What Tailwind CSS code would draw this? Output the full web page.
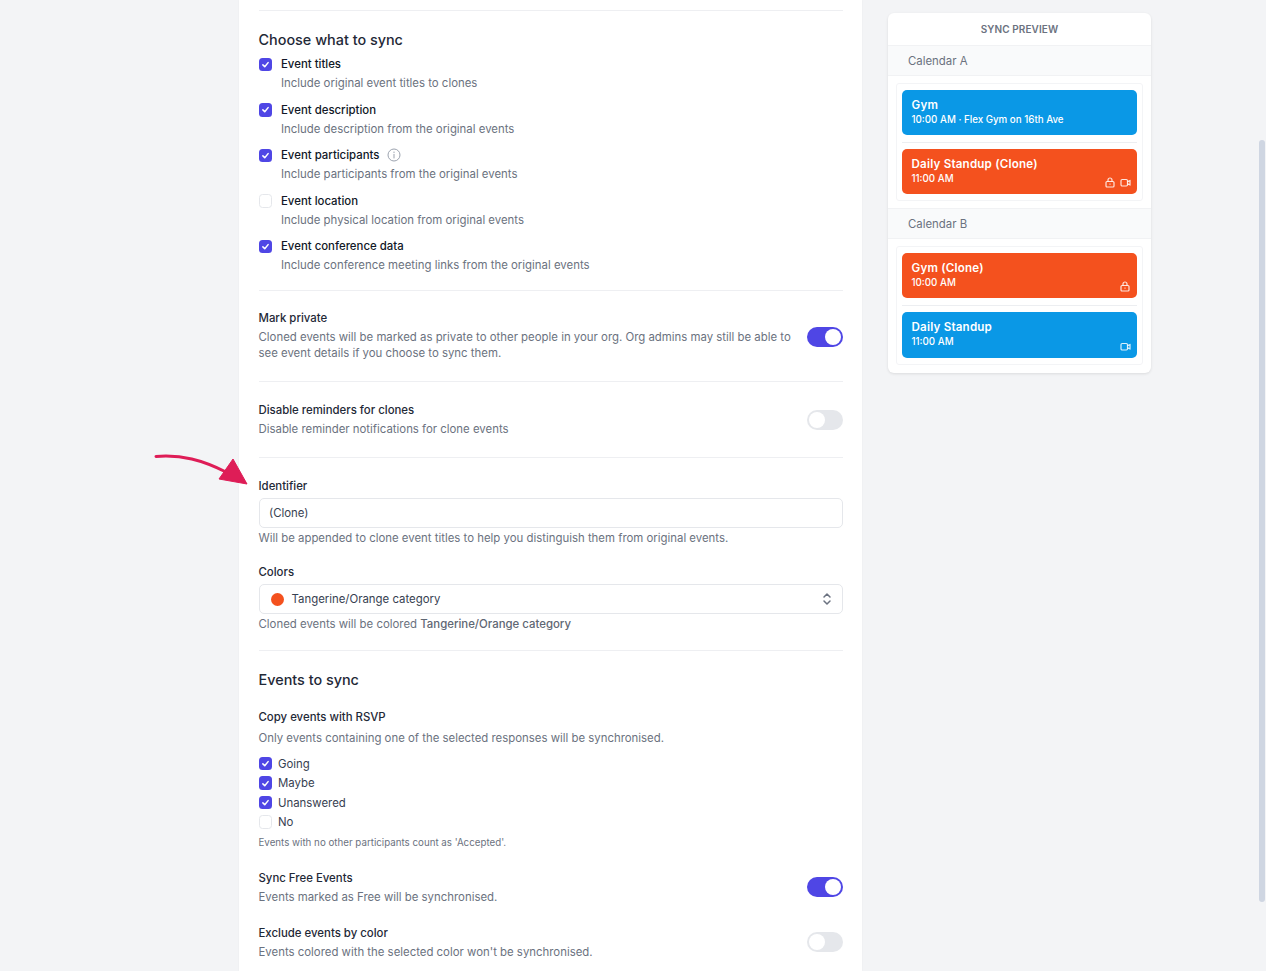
<!DOCTYPE html>
<html lang="en">
<head>
    <meta charset="UTF-8">
    <meta name="viewport" content="width=device-width, initial-scale=1.0">
    <title>Sync settings</title>
    <script src="https://cdn.jsdelivr.net/npm/@tailwindcss/browser@4"></script>
</head>
<body class="bg-[#f3f4f6] font-[Inter,sans-serif] text-[11.4px] leading-[16px] text-[#6b7280] h-[971px] overflow-hidden relative">
    <!-- scrollbar -->
    <div class="absolute right-[1px] top-[140px] w-[6px] h-[762px] rounded-full bg-[#cfd6e2]"></div>

    <!-- arrow -->
    <svg class="absolute left-[150px] top-[448px]" width="100" height="40" viewBox="0 0 100 40">
        <path d="M6 8.5C32 6.5 52 12 76 24" fill="none" stroke="#de1d57" stroke-width="3" stroke-linecap="round"/>
        <path d="M83 11L97 36L69 31Z" fill="#de1d57" stroke="#de1d57" stroke-linejoin="round"/>
    </svg>

    <div class="flex items-start pl-[239px] gap-[26px]">
        <!-- Settings column -->
        <div class="w-[623px] h-[971px] bg-white px-[19.5px] pt-[10px] shadow-[0_0_2px_rgba(0,0,0,0.04)]">
            <div class="border-t border-[#eeeff2]"></div>

            <h2 class="mt-[18.5px] text-[14.4px] leading-[20px] font-medium text-[#1f2937]">Choose what to sync</h2>

            <div class="mt-[6.5px] flex flex-col gap-[7.5px]">
                <div class="flex gap-[9px]">
                    <span class="mt-[1.5px] w-[13.5px] h-[13.5px] shrink-0 rounded-[3.5px] bg-[#4f46e5] flex items-center justify-center"><svg width="9" height="9" viewBox="0 0 12 12"><path d="M2.5 6.5L5 9L9.5 3.5" fill="none" stroke="#fff" stroke-width="2" stroke-linecap="round" stroke-linejoin="round"/></svg></span>
                    <div>
                        <div class="h-[19px] text-[#111827] font-medium">Event titles</div>
                        <div class="leading-[17px] h-[19px]">Include original event titles to clones</div>
                    </div>
                </div>
                <div class="flex gap-[9px]">
                    <span class="mt-[1.5px] w-[13.5px] h-[13.5px] shrink-0 rounded-[3.5px] bg-[#4f46e5] flex items-center justify-center"><svg width="9" height="9" viewBox="0 0 12 12"><path d="M2.5 6.5L5 9L9.5 3.5" fill="none" stroke="#fff" stroke-width="2" stroke-linecap="round" stroke-linejoin="round"/></svg></span>
                    <div>
                        <div class="h-[19px] text-[#111827] font-medium">Event description</div>
                        <div class="leading-[17px] h-[19px]">Include description from the original events</div>
                    </div>
                </div>
                <div class="flex gap-[9px]">
                    <span class="mt-[1.5px] w-[13.5px] h-[13.5px] shrink-0 rounded-[3.5px] bg-[#4f46e5] flex items-center justify-center"><svg width="9" height="9" viewBox="0 0 12 12"><path d="M2.5 6.5L5 9L9.5 3.5" fill="none" stroke="#fff" stroke-width="2" stroke-linecap="round" stroke-linejoin="round"/></svg></span>
                    <div>
                        <div class="h-[19px] text-[#111827] font-medium flex items-start gap-[7.5px]">Event participants
                            <svg class="mt-[1px]" width="14" height="14" viewBox="0 0 14 14" fill="none" stroke="#9ca3af"><circle cx="7" cy="7" r="6"/><path d="M7 6.3V10M7 4V4.6" stroke-linecap="round"/></svg>
                        </div>
                        <div class="leading-[17px] h-[19px]">Include participants from the original events</div>
                    </div>
                </div>
                <div class="flex gap-[9px]">
                    <span class="mt-[1.5px] w-[13.5px] h-[13.5px] shrink-0 rounded-[3.5px] bg-white border border-[#e5e7eb]"></span>
                    <div>
                        <div class="h-[19px] text-[#111827] font-medium">Event location</div>
                        <div class="leading-[17px] h-[19px]">Include physical location from original events</div>
                    </div>
                </div>
                <div class="flex gap-[9px]">
                    <span class="mt-[1.5px] w-[13.5px] h-[13.5px] shrink-0 rounded-[3.5px] bg-[#4f46e5] flex items-center justify-center"><svg width="9" height="9" viewBox="0 0 12 12"><path d="M2.5 6.5L5 9L9.5 3.5" fill="none" stroke="#fff" stroke-width="2" stroke-linecap="round" stroke-linejoin="round"/></svg></span>
                    <div>
                        <div class="h-[19px] text-[#111827] font-medium">Event conference data</div>
                        <div class="leading-[17px] h-[19px]">Include conference meeting links from the original events</div>
                    </div>
                </div>
            </div>

            <div class="mt-[14px] border-t border-[#eeeff2]"></div>

            <div class="mt-[19px] flex justify-between">
                <div class="w-[540px]">
                    <div class="h-[19px] text-[#1f2937] font-medium">Mark private</div>
                    <div>Cloned events will be marked as private to other people in your org. Org admins may still be able to see event details if you choose to sync them.</div>
                </div>
                <span class="mt-[16.5px] w-[36px] h-[20px] rounded-full bg-[#4f46e5] flex justify-end items-center p-[2px]"><span class="w-[16px] h-[16px] rounded-full bg-white"></span></span>
            </div>

            <div class="mt-[20px] border-t border-[#eeeff2]"></div>

            <div class="mt-[20px] flex justify-between">
                <div>
                    <div class="h-[19px] text-[#1f2937] font-medium">Disable reminders for clones</div>
                    <div>Disable reminder notifications for clone events</div>
                </div>
                <span class="mt-[8px] w-[36px] h-[20px] rounded-full bg-[#e5e7eb] flex items-center p-[2px]"><span class="w-[16px] h-[16px] rounded-full bg-white"></span></span>
            </div>

            <div class="mt-[20px] border-t border-[#eeeff2]"></div>

            <label class="block mt-[20px] text-[#1f2937] font-medium">Identifier</label>
            <div class="mt-[4px] h-[30px] rounded-[5px] border border-[#e5e7eb] bg-white px-[9.5px] flex items-center text-[#374151]">(Clone)</div>
            <p class="mt-[2px]">Will be appended to clone event titles to help you distinguish them from original events.</p>

            <label class="block mt-[18px] text-[#1f2937] font-medium">Colors</label>
            <div class="mt-[4px] h-[30px] rounded-[5px] border border-[#e5e7eb] bg-white pl-[11px] pr-[10px] flex items-center text-[#374151]">
                <span class="w-[13px] h-[13px] rounded-full bg-[#f4511e]"></span>
                <span class="ml-[8px]">Tangerine/Orange category</span>
                <svg class="ml-auto" width="10" height="14" viewBox="0 0 10 14" fill="none" stroke="#6b7280" stroke-width="1.5" stroke-linecap="round" stroke-linejoin="round"><path d="M2 5L5 2L8 5M2 9L5 12L8 9"/></svg>
            </div>
            <p class="mt-[2px]">Cloned events will be colored <span class="text-[#5f6774] font-medium">Tangerine/Orange category</span></p>

            <div class="mt-[18px] border-t border-[#eeeff2]"></div>

            <h2 class="mt-[18.5px] text-[14.4px] leading-[20px] font-medium text-[#1f2937]">Events to sync</h2>

            <div class="mt-[19px] text-[#1f2937] font-medium">Copy events with RSVP</div>
            <p class="mt-[5.5px]">Only events containing one of the selected responses will be synchronised.</p>

            <div class="mt-[9.5px] flex flex-col gap-[3.5px] text-[#374151]">
                <div class="flex items-center gap-[6px] h-[16px]"><span class="w-[13.5px] h-[13.5px] shrink-0 rounded-[3.5px] bg-[#4f46e5] flex items-center justify-center"><svg width="9" height="9" viewBox="0 0 12 12"><path d="M2.5 6.5L5 9L9.5 3.5" fill="none" stroke="#fff" stroke-width="2" stroke-linecap="round" stroke-linejoin="round"/></svg></span>Going</div>
                <div class="flex items-center gap-[6px] h-[16px]"><span class="w-[13.5px] h-[13.5px] shrink-0 rounded-[3.5px] bg-[#4f46e5] flex items-center justify-center"><svg width="9" height="9" viewBox="0 0 12 12"><path d="M2.5 6.5L5 9L9.5 3.5" fill="none" stroke="#fff" stroke-width="2" stroke-linecap="round" stroke-linejoin="round"/></svg></span>Maybe</div>
                <div class="flex items-center gap-[6px] h-[16px]"><span class="w-[13.5px] h-[13.5px] shrink-0 rounded-[3.5px] bg-[#4f46e5] flex items-center justify-center"><svg width="9" height="9" viewBox="0 0 12 12"><path d="M2.5 6.5L5 9L9.5 3.5" fill="none" stroke="#fff" stroke-width="2" stroke-linecap="round" stroke-linejoin="round"/></svg></span>Unanswered</div>
                <div class="flex items-center gap-[6px] h-[16px]"><span class="w-[13.5px] h-[13.5px] shrink-0 rounded-[3.5px] bg-white border border-[#e5e7eb]"></span>No</div>
            </div>
            <p class="mt-[5px] text-[9.75px]">Events with no other participants count as 'Accepted'.</p>

            <div class="mt-[18.5px] flex justify-between">
                <div>
                    <div class="h-[19.5px] text-[#1f2937] font-medium">Sync Free Events</div>
                    <div>Events marked as Free will be synchronised.</div>
                </div>
                <span class="mt-[7px] w-[36px] h-[20px] rounded-full bg-[#4f46e5] flex justify-end items-center p-[2px]"><span class="w-[16px] h-[16px] rounded-full bg-white"></span></span>
            </div>

            <div class="mt-[19.5px] flex justify-between">
                <div>
                    <div class="h-[19.5px] text-[#1f2937] font-medium">Exclude events by color</div>
                    <div>Events colored with the selected color won't be synchronised.</div>
                </div>
                <span class="mt-[7px] w-[36px] h-[20px] rounded-full bg-[#e5e7eb] flex items-center p-[2px]"><span class="w-[16px] h-[16px] rounded-full bg-white"></span></span>
            </div>
        </div>

        <!-- Sync preview -->
        <div class="mt-[13px] w-[263px] bg-white rounded-[6px] shadow-[0_1px_3px_rgba(0,0,0,0.10)] overflow-hidden pb-[8px]">
            <div class="h-[32px] flex items-center justify-center text-[10px] font-semibold tracking-[0.1px] text-[#6b7280]">SYNC PREVIEW</div>

            <div class="h-[31px] flex items-center px-[20px] bg-[#f9fafb] border-y border-[#f1f2f4]">Calendar A</div>
            <div class="mx-[8px] mt-[7px] rounded-[3px] border border-[#f3f4f6] px-[5px]">
                <div class="pt-[6px] pb-[7px] border-b border-[#eceef1]">
                    <div class="h-[45px] rounded-[5px] bg-[#0a98e6] text-white px-[9.5px] pt-[7px]">
                        <div class="text-[11.6px] tracking-[0.2px] leading-[16px] font-semibold">Gym</div>
                        <div class="text-[9.75px] leading-[14px] font-medium">10:00 AM · Flex Gym on 16th Ave</div>
                    </div>
                </div>
                <div class="pt-[6px] pb-[6px]">
                    <div class="relative h-[45px] rounded-[5px] bg-[#f4511e] text-white px-[9.5px] pt-[7px]">
                        <div class="text-[11.6px] tracking-[0.2px] leading-[16px] font-semibold">Daily Standup (Clone)</div>
                        <div class="text-[9.75px] leading-[14px] font-medium">11:00 AM</div>
                        <div class="absolute right-[6px] bottom-[6px] flex gap-[5px]">
                            <svg width="10" height="11" viewBox="0 0 10 11" fill="none" stroke="#fff" stroke-opacity="0.85" stroke-width="1.2"><rect x="1" y="4.5" width="8" height="5.5" rx="1"/><path d="M3 4.5V3a2 2 0 0 1 4 0v1.5M4.5 7.2h1"/></svg>
                            <svg width="11" height="11" viewBox="0 0 11 11" fill="none" stroke="#fff" stroke-opacity="0.85" stroke-width="1.2"><rect x="1" y="2.5" width="6.5" height="6.5" rx="1.2"/><path d="M7.5 4.6L10 3.6V7.9L7.5 6.9"/></svg>
                        </div>
                    </div>
                </div>
            </div>

            <div class="mt-[7px] h-[31px] flex items-center px-[20px] bg-[#f9fafb] border-y border-[#f1f2f4]">Calendar B</div>
            <div class="mx-[8px] mt-[7px] rounded-[3px] border border-[#f3f4f6] px-[5px]">
                <div class="pt-[6px] pb-[7px] border-b border-[#eceef1]">
                    <div class="relative h-[45px] rounded-[5px] bg-[#f4511e] text-white px-[9.5px] pt-[7px]">
                        <div class="text-[11.6px] tracking-[0.2px] leading-[16px] font-semibold">Gym (Clone)</div>
                        <div class="text-[9.75px] leading-[14px] font-medium">10:00 AM</div>
                        <div class="absolute right-[7px] bottom-[6px] flex">
                            <svg width="10" height="11" viewBox="0 0 10 11" fill="none" stroke="#fff" stroke-opacity="0.85" stroke-width="1.2"><rect x="1" y="4.5" width="8" height="5.5" rx="1"/><path d="M3 4.5V3a2 2 0 0 1 4 0v1.5M4.5 7.2h1"/></svg>
                        </div>
                    </div>
                </div>
                <div class="pt-[6px] pb-[6px]">
                    <div class="relative h-[46px] rounded-[5px] bg-[#0a98e6] text-white px-[9.5px] pt-[7px]">
                        <div class="text-[11.6px] tracking-[0.2px] leading-[16px] font-semibold">Daily Standup</div>
                        <div class="text-[9.75px] leading-[14px] font-medium">11:00 AM</div>
                        <div class="absolute right-[6px] bottom-[6px] flex">
                            <svg width="11" height="11" viewBox="0 0 11 11" fill="none" stroke="#fff" stroke-opacity="0.85" stroke-width="1.2"><rect x="1" y="2.5" width="6.5" height="6.5" rx="1.2"/><path d="M7.5 4.6L10 3.6V7.9L7.5 6.9"/></svg>
                        </div>
                    </div>
                </div>
            </div>
        </div>
    </div>
</body>
</html>
